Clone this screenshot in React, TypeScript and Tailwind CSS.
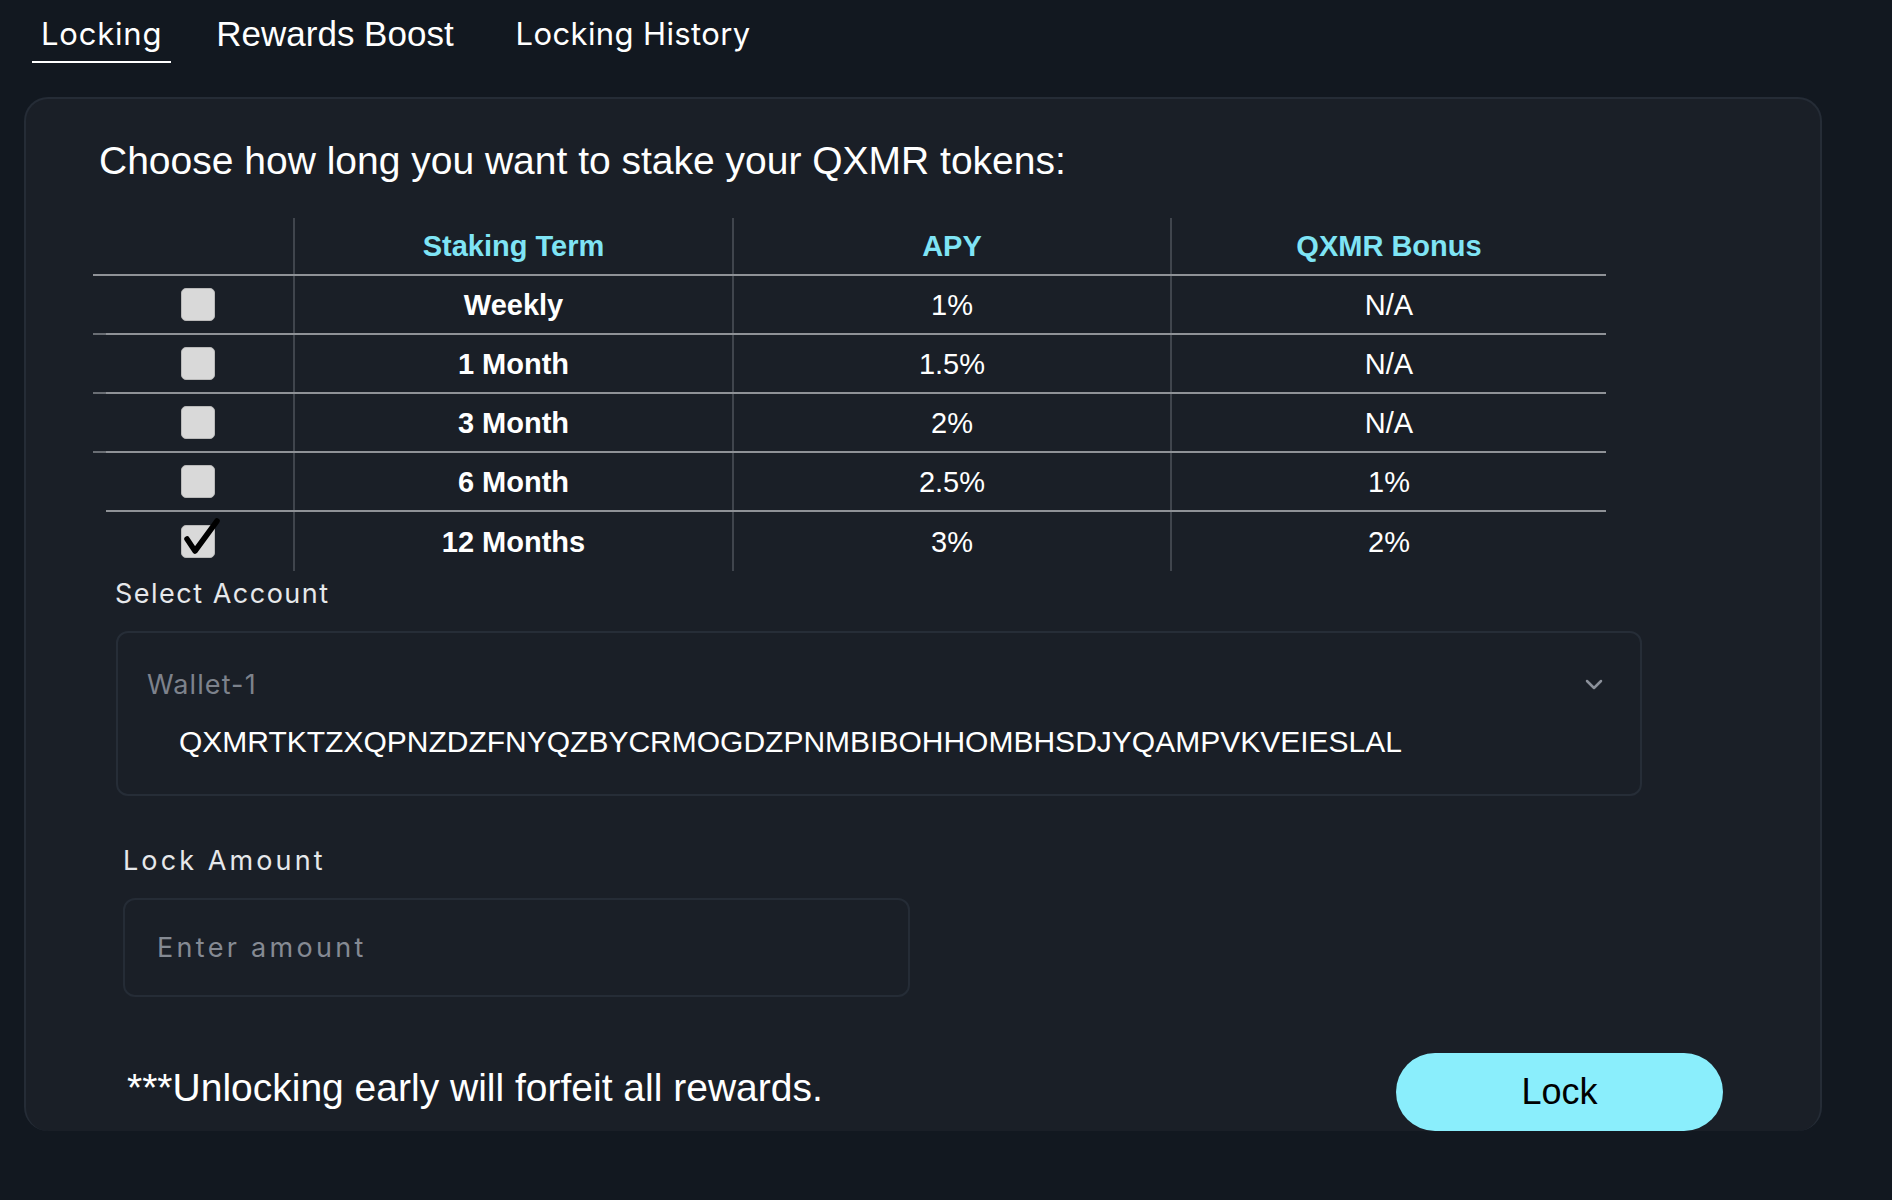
import React, { useState } from "react";

const terms = [
  { term: "Weekly", apy: "1%", bonus: "N/A", tick: true },
  { term: "1 Month", apy: "1.5%", bonus: "N/A", tick: true },
  { term: "3 Month", apy: "2%", bonus: "N/A", tick: true },
  { term: "6 Month", apy: "2.5%", bonus: "1%", tick: false },
  { term: "12 Months", apy: "3%", bonus: "2%", tick: false },
];

const grotesk = "font-['Inter','Liberation_Sans',sans-serif]";

function Checkbox({ checked, onClick }: { checked: boolean; onClick: () => void }) {
  return (
    <button
      type="button"
      onClick={onClick}
      className="relative w-[34px] h-[33px] rounded-[5px] bg-[#d9d9d9] border border-[#b9b9b9]"
      aria-checked={checked}
      role="checkbox"
    >
      {checked && (
        <svg
          className="absolute -top-[6px] left-0 w-[40px] h-[40px] overflow-visible"
          viewBox="0 0 40 40"
          fill="none"
          stroke="#000"
          strokeWidth="5.5"
          strokeLinecap="round"
          strokeLinejoin="round"
        >
          <path d="M5 19 L13 31 L35 1" />
        </svg>
      )}
    </button>
  );
}

export default function App() {
  const [selected, setSelected] = useState(4);
  const [amount, setAmount] = useState("");

  return (
    <div className="min-h-[1200px] w-full bg-[#121820] font-['Liberation_Sans',Arial,sans-serif] text-white overflow-hidden">
      {/* Tabs */}
      <div className="flex items-end pl-[32px] pt-[13px]">
        <div className={`${grotesk} px-[9px] pb-[7px] border-b-2 border-white text-[31px] leading-[41px] tracking-[0.8px]`}>
          Locking
        </div>
        <div className="ml-[45px] pb-[9px] text-[35px] leading-[41px]">Rewards Boost</div>
        <div className={`${grotesk} ml-[62px] pb-[9px] text-[31px] leading-[41px] tracking-[0.38px]`}>
          Locking History
        </div>
      </div>

      {/* Card */}
      <div className="ml-[24px] mt-[34px] w-[1798px] rounded-[24px] border-2 border-b-0 border-[#252c36] bg-[#1a1f27]">
        <h2 className="ml-[73px] mt-[39px] text-[39px] leading-[46px] font-normal">
          Choose how long you want to stake your QXMR tokens:
        </h2>

        {/* Table */}
        <div className="ml-[67px] mt-[34px] flex flex-col">
          <div className="flex">
            <div className="w-[13px] border-b-2 border-[#8f9297]" />
            <div className="grid grid-cols-[187px_439px_438px_436px] h-[58px] border-b-2 border-[#8f9297] text-[29px] font-bold text-[#7fe4f5]">
              <div />
              <div className="border-l-2 border-[#40454d] flex items-center justify-center pt-[2px]">Staking Term</div>
              <div className="border-l-2 border-[#40454d] flex items-center justify-center pt-[2px]">APY</div>
              <div className="border-l-2 border-[#40454d] flex items-center justify-center pt-[2px]">QXMR Bonus</div>
            </div>
          </div>
          {terms.map((t, i) => {
            const last = i === terms.length - 1;
            return (
              <div key={t.term} className="flex">
                <div className={`w-[13px] ${t.tick ? "border-b-2 border-[#6a6e74]" : ""}`} />
                <div
                  className={`grid grid-cols-[187px_439px_438px_436px] h-[59px] text-[29px] ${
                    last ? "" : "border-b-2 border-[#8f9297]"
                  }`}
                >
                  <div className="flex items-center justify-center pr-[4px]">
                    <Checkbox checked={selected === i} onClick={() => setSelected(i)} />
                  </div>
                  <div className="border-l-2 border-[#40454d] flex items-center justify-center pt-[2px] font-bold">{t.term}</div>
                  <div className="border-l-2 border-[#40454d] flex items-center justify-center pt-[2px]">{t.apy}</div>
                  <div className="border-l-2 border-[#40454d] flex items-center justify-center pt-[2px]">{t.bonus}</div>
                </div>
              </div>
            );
          })}
        </div>

        {/* Select Account */}
        <div className={`${grotesk} ml-[89px] mt-[7px] text-[27px] leading-[31px] tracking-[1.5px] text-[#e6e8eb]`}>
          Select Account
        </div>
        <div className="ml-[90px] mt-[22px] w-[1526px] h-[165px] rounded-[12px] border-2 border-[#262d37] bg-[#1a1f27] pt-[36px] pl-[29px] pr-[37px]">
          <div className="flex items-center justify-between">
            <span className={`${grotesk} text-[27px] leading-[31px] tracking-[1.1px] text-[#7d828c]`}>Wallet-1</span>
            <svg width="18" height="11" viewBox="0 0 18 11" fill="none" stroke="#8b909a" strokeWidth="2.5" strokeLinecap="round" strokeLinejoin="round">
              <path d="M2 2 L9 9 L16 2" />
            </svg>
          </div>
          <div className="ml-[32px] mt-[24px] text-[30px] leading-[36px] text-white">
            QXMRTKTZXQPNZDZFNYQZBYCRMOGDZPNMBIBOHHOMBHSDJYQAMPVKVEIESLAL
          </div>
        </div>

        {/* Lock Amount */}
        <div className={`${grotesk} ml-[97px] mt-[49px] text-[27px] leading-[31px] tracking-[3.1px] text-[#e6e8eb]`}>
          Lock Amount
        </div>
        <input
          value={amount}
          onChange={(e) => setAmount(e.target.value)}
          placeholder="Enter amount"
          className={`${grotesk} block ml-[97px] mt-[22px] w-[787px] h-[99px] rounded-[12px] border-2 border-[#252c36] bg-[#1a1f27] px-[32px] text-[27px] tracking-[3.3px] text-white placeholder:text-[#858a93] outline-none`}
        />

        {/* Footer */}
        <div className="mt-[56px] flex items-center justify-between pl-[101px] pr-[97px]">
          <p className="text-[39px] leading-[46px] -mt-[8px]">***Unlocking early will forfeit all rewards.</p>
          <button
            type="button"
            className="w-[327px] h-[78px] rounded-full bg-[#8aeefc] text-black text-[36px] leading-none"
          >
            Lock
          </button>
        </div>
      </div>
    </div>
  );
}
